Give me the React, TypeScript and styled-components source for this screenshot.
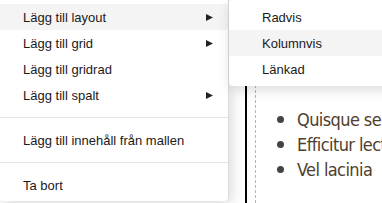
import React from "react";
import styled, { createGlobalStyle } from "styled-components";

const Global = createGlobalStyle`
  html, body { margin: 0; padding: 0; background: #fff; }
  body { overflow: hidden; font-family: "Liberation Sans", Arial, sans-serif; }
`;

const Page = styled.div`
  position: relative;
  width: 382px;
  height: 203px;
  overflow: hidden;
  background: #fff;
`;

const Canvas = styled.div`
  display: flex;
  height: 100%;
  padding-left: 245px;
  box-sizing: border-box;
`;

const Column = styled.div`
  flex: 1;
  border-left: 2px solid #000;
  padding-left: 8px;
  display: flex;
`;

const Region = styled.div`
  flex: 1;
  border-left: 1px dashed #b5b5b5;
`;

const List = styled.ul`
  list-style: none;
  margin: 0;
  padding: 107px 0 0 21px;
  font-family: "DejaVu Sans Condensed", "DejaVu Sans", sans-serif;
  font-stretch: condensed;
  font-weight: 300;
  font-size: 18px;
  letter-spacing: -0.6px;
  line-height: 25px;
  color: #4f3e2e;
  white-space: nowrap;
`;

const ListItem = styled.li`
  display: flex;
  align-items: center;
  gap: 13px;
`;

const Bullet = styled.span`
  width: 7px;
  height: 7px;
  border-radius: 50%;
  background: #444;
  flex: none;
`;

const Menu = styled.div<{ $left: number; $width: number }>`
  position: absolute;
  top: 0;
  left: ${(p) => p.$left}px;
  width: ${(p) => p.$width}px;
  background: #fff;
  box-sizing: border-box;
  border-radius: 0 0 4px 4px;
  box-shadow: 2px 3px 14px rgba(0, 0, 0, 0.16);
`;

const MainMenu = styled(Menu)`
  padding: 4px 0 3px;
  border-right: 1px solid #dcdcdc;
  z-index: 1;
`;

const SubMenu = styled(Menu)`
  padding: 4px 0;
  border-radius: 4px;
  z-index: 2;
`;

const Item = styled.div<{ $indent: number; $active?: boolean }>`
  height: 26px;
  display: flex;
  align-items: center;
  justify-content: space-between;
  padding: 0 15px 0 ${(p) => p.$indent}px;
  font-size: 13px;
  color: #1a1a1a;
  background: ${(p) => (p.$active ? "#f4f4f4" : "transparent")};
  white-space: nowrap;
`;

const Separator = styled.div`
  height: 1px;
  margin: 9px 0;
  background: #e4e4e4;
`;

const Arrow = () => (
  <svg width="7" height="7" viewBox="0 0 7 7">
    <polygon points="0,0 7,3.5 0,7" fill="#222" />
  </svg>
);

export default function App() {
  return (
    <Page>
      <Global />
      <Canvas>
        <Column>
          <Region>
            <List>
              <ListItem><Bullet />Quisque sem</ListItem>
              <ListItem><Bullet />Efficitur lectus</ListItem>
              <ListItem><Bullet />Vel lacinia</ListItem>
            </List>
          </Region>
        </Column>
      </Canvas>
      <MainMenu $left={0} $width={229}>
        <Item $indent={23} $active>Lägg till layout<Arrow /></Item>
        <Item $indent={23}>Lägg till grid<Arrow /></Item>
        <Item $indent={23}>Lägg till gridrad</Item>
        <Item $indent={23}>Lägg till spalt<Arrow /></Item>
        <Separator />
        <Item $indent={23}>Lägg till innehåll från mallen</Item>
        <Separator />
        <Item $indent={23}>Ta bort</Item>
      </MainMenu>
      <SubMenu $left={229} $width={170}>
        <Item $indent={33}>Radvis</Item>
        <Item $indent={33} $active>Kolumnvis</Item>
        <Item $indent={33}>Länkad</Item>
      </SubMenu>
    </Page>
  );
}
